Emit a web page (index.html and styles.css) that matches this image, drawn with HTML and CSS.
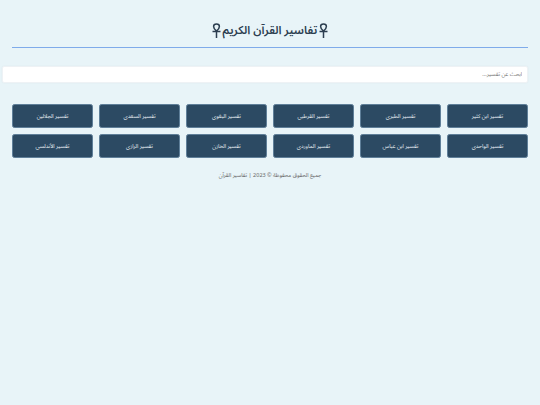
FILE: index.html
```html
<!DOCTYPE html>
<html lang="ar" dir="rtl">
<head>
<meta charset="utf-8">
<title>تفاسير القرآن الكريم</title>
<link rel="stylesheet" href="styles.css">
</head>
<body>
<div class="page">
  <h1 class="title">
    <svg class="ankh" viewBox="0 0 9 15" aria-hidden="true"><path d="M4.5 8C2.8 6.6 1.6 5 1.6 3.4 1.6 1.9 2.8 1 4.5 1s2.9.9 2.9 2.4C7.4 5 6.2 6.6 4.5 8ZM.5 8.6h8M4.5 8v7"/></svg>
    <span>تفاسير القرآن الكريم</span>
    <svg class="ankh" viewBox="0 0 9 15" aria-hidden="true"><path d="M4.5 8C2.8 6.6 1.6 5 1.6 3.4 1.6 1.9 2.8 1 4.5 1s2.9.9 2.9 2.4C7.4 5 6.2 6.6 4.5 8ZM.5 8.6h8M4.5 8v7"/></svg>
  </h1>
  <input class="search" type="text" placeholder="ابحث عن تفسير...">
  <div class="grid">
    <button class="tafsir">تفسير ابن كثير</button>
    <button class="tafsir">تفسير الطبري</button>
    <button class="tafsir">تفسير القرطبي</button>
    <button class="tafsir">تفسير البغوي</button>
    <button class="tafsir">تفسير السعدي</button>
    <button class="tafsir">تفسير الجلالين</button>
    <button class="tafsir">تفسير الواحدي</button>
    <button class="tafsir">تفسير ابن عباس</button>
    <button class="tafsir">تفسير الماوردي</button>
    <button class="tafsir">تفسير الخازن</button>
    <button class="tafsir">تفسير الرازي</button>
    <button class="tafsir">تفسير الأندلسي</button>
  </div>
  <p class="footer">جميع الحقوق محفوظة © 2023 | تفاسير القرآن</p>
</div>
</body>
</html>
```
FILE: styles.css
```css
html, body {
  margin: 0;
  background: #e8f4f8;
}
body {
  font-family: "Noto Sans Arabic", "Liberation Sans", sans-serif;
  color: #2c3e50;
}
.page {
  padding: 20px 12px 0;
}
.title {
  display: flex;
  justify-content: center;
  align-items: center;
  gap: 2px;
  box-sizing: border-box;
  height: 28px;
  margin: 0 0 17.5px;
  padding-bottom: 7px;
  font-size: 11.5px;
  font-weight: 600;
  color: #2c3e50;
  border-bottom: 1px solid #7fabea;
}
.ankh {
  width: 9px;
  height: 15px;
  fill: none;
  stroke: #2c3e50;
  stroke-width: 1.5;
}
.search {
  display: block;
  box-sizing: border-box;
  width: 526px;
  height: 17.5px;
  margin: 0 0 21px;
  padding: 0 5px;
  border: 1px solid #eef2f5;
  border-radius: 2px;
  background: #fff;
  font-family: inherit;
  font-size: 5.5px;
  color: #555;
  box-shadow: 0 0 2px rgba(0, 0, 0, 0.05);
}
.search::placeholder {
  color: #777;
}
.grid {
  display: grid;
  grid-template-columns: repeat(6, 1fr);
  gap: 6px;
}
.tafsir {
  height: 24px;
  padding: 0;
  border: 1px solid #5f7f99;
  border-radius: 2.5px;
  background: #2c4a63;
  color: #e8eef3;
  font-family: inherit;
  font-size: 5.5px;
}
.footer {
  margin: 13px 0 0;
  font-size: 5.5px;
  line-height: 8px;
  text-align: center;
  color: #666;
}
```
